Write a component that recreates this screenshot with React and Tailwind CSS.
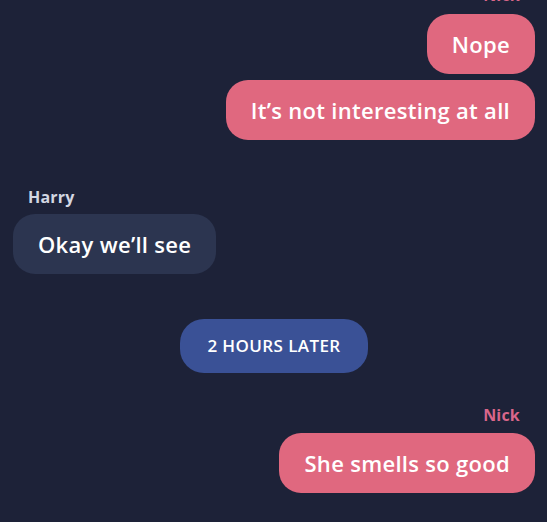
import React from 'react';

const FONT = { fontFamily: '"Open Sans", "Liberation Sans", sans-serif' };

function Label({ name, mine }) {
  return (
    <div
      className={`text-[16px] font-bold leading-[18px] tracking-[0.2px] ${
        mine ? 'text-right pr-[15px] text-[#d9668a]' : 'pl-[15px] text-[#d3d7e2]'
      }`}
    >
      {name}
    </div>
  );
}

function Bubble({ text, mine }) {
  return (
    <div className={`flex ${mine ? 'justify-end' : 'justify-start'}`}>
      <div
        className={`flex h-[60px] items-center rounded-[22px] px-[25px] text-[22px] font-semibold tracking-[0.3px] text-white ${
          mine ? 'bg-[#e0687f]' : 'bg-[#2c3550]'
        }`}
      >
        {text}
      </div>
    </div>
  );
}

export default function App() {
  return (
    <div
      className="h-[522px] w-[547px] overflow-hidden bg-[#1d2238] pl-[13px] pr-[12px]"
      style={FONT}
    >
      <div className="-mt-[14px]">
        <Label name="Nick" mine />
      </div>
      <div className="mt-[10px] flex flex-col gap-[6px]">
        <Bubble text="Nope" mine />
        <Bubble text="It’s not interesting at all" mine />
      </div>

      <div className="mt-[48px]">
        <Label name="Harry" />
      </div>
      <div className="mt-[8px]">
        <Bubble text="Okay we’ll see" />
      </div>

      <div className="mt-[45px] flex justify-center">
        <div className="flex h-[54px] items-center rounded-[24px] bg-[#3a5196] px-[27px] text-[17px] font-semibold tracking-[0.4px] text-white">
          2 HOURS LATER
        </div>
      </div>

      <div className="mt-[33px]">
        <Label name="Nick" mine />
      </div>
      <div className="mt-[9px]">
        <Bubble text="She smells so good" mine />
      </div>
    </div>
  );
}
